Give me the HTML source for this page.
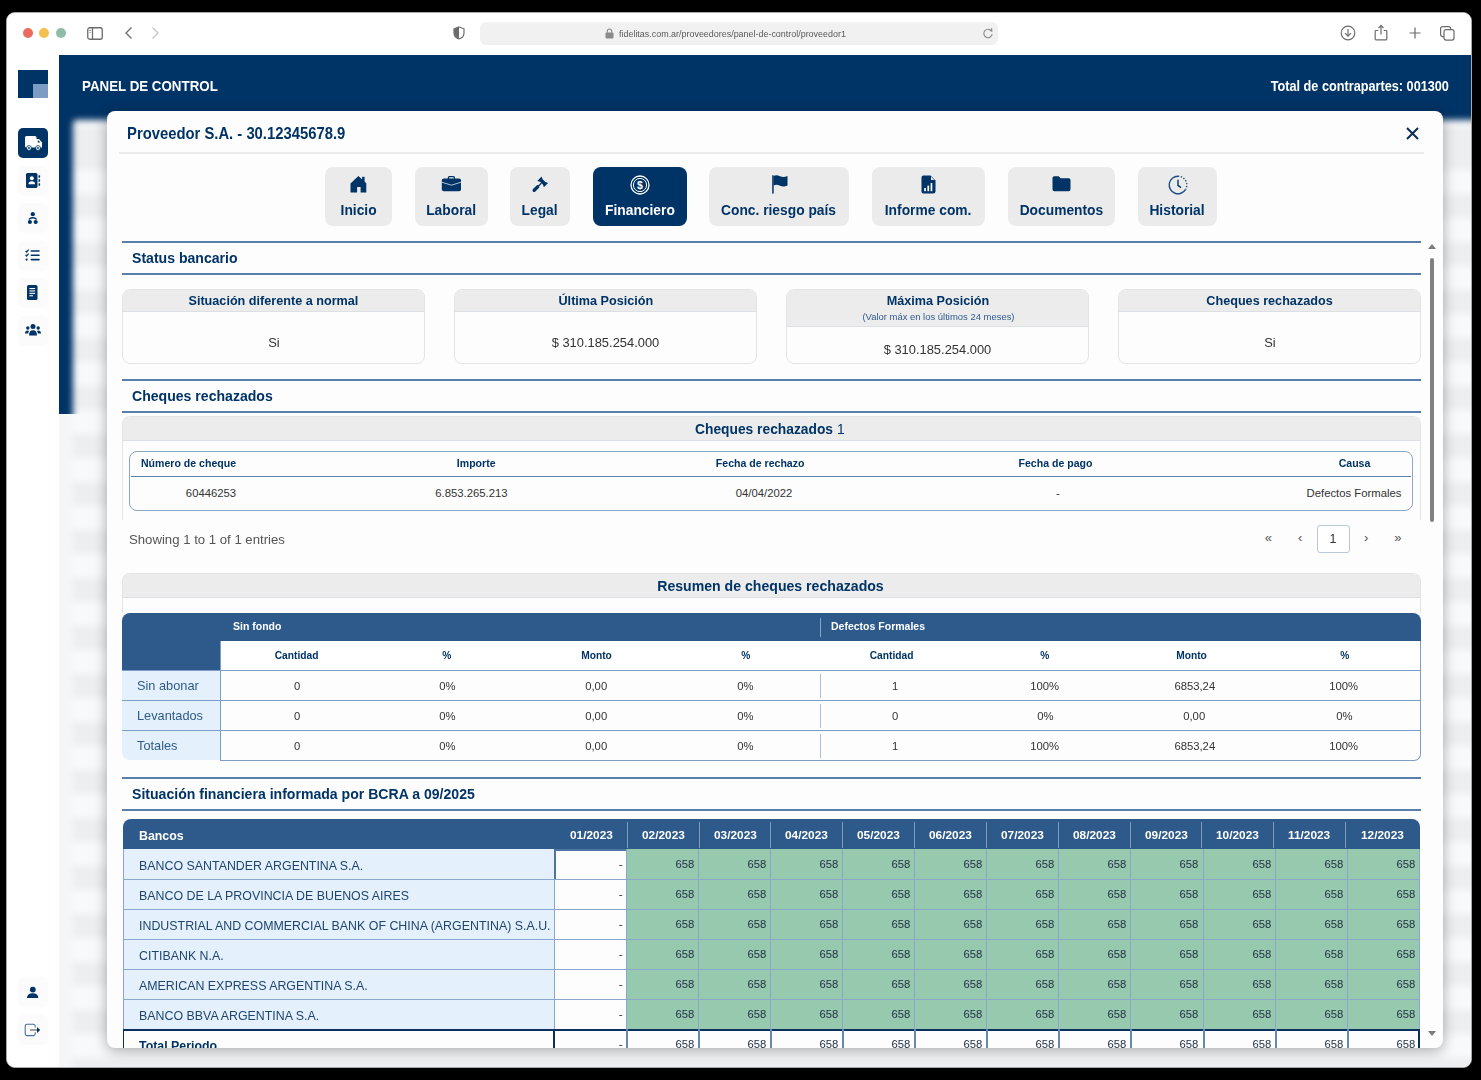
<!DOCTYPE html>
<html><head><meta charset="utf-8">
<style>
*{box-sizing:border-box}
html,body{margin:0;padding:0}
body{width:1481px;height:1080px;background:#000;position:relative;overflow:hidden;font-family:"Liberation Sans",sans-serif;color:#333}
.a{position:absolute}
.t{white-space:nowrap}
.win{position:absolute;left:6px;top:12px;width:1466px;height:1056px;border:1px solid #a8a8a8;border-radius:9px;background:#fff;overflow:hidden}
.pc{position:absolute;left:-7px;top:-13px;width:1481px;height:1080px}
svg{position:absolute;overflow:visible}
</style></head><body>
<div class="win"><div class="pc">
<div class="a" style="left:7px;top:13px;width:1464px;height:42px;background:#fff"></div>
<div class="a" style="left:23px;top:28px;width:10px;height:10px;border-radius:50%;background:#ec6a5e"></div>
<div class="a" style="left:39px;top:28px;width:10px;height:10px;border-radius:50%;background:#f3bf4f"></div>
<div class="a" style="left:56px;top:28px;width:10px;height:10px;border-radius:50%;background:#8fbca8"></div>
<svg style="left:87px;top:27px" width="16" height="13"><rect x="0.75" y="0.75" width="14.5" height="11.5" rx="2" fill="none" stroke="#6b6b6b" stroke-width="1.3"/><line x1="5.5" y1="1" x2="5.5" y2="12" stroke="#6b6b6b" stroke-width="1.3"/><line x1="2.3" y1="3.5" x2="4" y2="3.5" stroke="#6b6b6b" stroke-width="0.9"/><line x1="2.3" y1="5.5" x2="4" y2="5.5" stroke="#8aa8d0" stroke-width="0.9"/></svg><svg style="left:124px;top:26px" width="10" height="14"><polyline points="7.5,1.5 2,7 7.5,12.5" fill="none" stroke="#6b6b6b" stroke-width="1.3"/></svg><svg style="left:150px;top:26px" width="10" height="14"><polyline points="2.5,1.5 8,7 2.5,12.5" fill="none" stroke="#c5c5c5" stroke-width="1.3"/></svg><svg style="left:453px;top:26px" width="12" height="14"><path d="M6 1 L11 2.8 V7 C11 10 8.5 12.3 6 13 C3.5 12.3 1 10 1 7 V2.8 Z" fill="none" stroke="#6b6b6b" stroke-width="1.2"/><path d="M6 1 L1 2.8 V7 C1 10 3.5 12.3 6 13 Z" fill="#6b6b6b"/></svg><div class="a" style="left:480px;top:22px;width:518px;height:23px;border-radius:6px;background:#f1f1f1"></div>
<svg style="left:605px;top:28px" width="9" height="11"><rect x="0.5" y="4.5" width="8" height="6" rx="1" fill="#8a8a8a"/><path d="M2.3 4.8 V3.2 A2.2 2.2 0 0 1 6.7 3.2 V4.8" fill="none" stroke="#8a8a8a" stroke-width="1.1"/></svg><div class="a t" style="left:619px;top:28.93px;font-size:9.5px;line-height:9.5px;font-weight:400;color:#5a5a5a;"><span style="display:inline-block;transform:scaleX(0.94);transform-origin:left center">fidelitas.com.ar/proveedores/panel-de-control/proveedor1</span></div>
<svg style="left:982px;top:27px" width="12" height="13"><path d="M9.6 4.2 A4.2 4.2 0 1 0 10.2 7.2" fill="none" stroke="#8a8a8a" stroke-width="1.1"/><polyline points="6.8,2.4 9.8,4.3 9.6,1" fill="none" stroke="#8a8a8a" stroke-width="1.1"/></svg><svg style="left:1340px;top:25px" width="16" height="16"><circle cx="8" cy="8" r="6.8" fill="none" stroke="#6b6b6b" stroke-width="1.2"/><line x1="8" y1="4" x2="8" y2="11" stroke="#6b6b6b" stroke-width="1.2"/><polyline points="5,8.2 8,11.2 11,8.2" fill="none" stroke="#6b6b6b" stroke-width="1.2"/></svg><svg style="left:1374px;top:24px" width="14" height="17"><path d="M4.3 6.5 H2 Q1.2 6.5 1.2 7.3 V15 Q1.2 15.8 2 15.8 H12 Q12.8 15.8 12.8 15 V7.3 Q12.8 6.5 12 6.5 H9.7" fill="none" stroke="#6b6b6b" stroke-width="1.2"/><line x1="7" y1="1.5" x2="7" y2="10.5" stroke="#6b6b6b" stroke-width="1.2"/><polyline points="4.5,4 7,1.5 9.5,4" fill="none" stroke="#6b6b6b" stroke-width="1.2"/></svg><svg style="left:1409px;top:27px" width="12" height="12"><line x1="6" y1="0.5" x2="6" y2="11.5" stroke="#6b6b6b" stroke-width="1.2"/><line x1="0.5" y1="6" x2="11.5" y2="6" stroke="#6b6b6b" stroke-width="1.2"/></svg><svg style="left:1440px;top:26px" width="15" height="15"><rect x="0.6" y="0.6" width="10" height="10" rx="2" fill="none" stroke="#6b6b6b" stroke-width="1.2"/><rect x="4" y="3.6" width="10" height="10.5" rx="2" fill="#fff" stroke="#6b6b6b" stroke-width="1.2"/></svg><div class="a" style="left:7px;top:55px;width:52px;height:1012px;background:#fff"></div>
<div class="a" style="left:18px;top:70px;width:30px;height:28px;background:#003366"></div>
<div class="a" style="left:33px;top:84px;width:15px;height:14px;background:#7d9cc3"></div>
<div class="a" style="left:18px;top:165.5px;width:30px;height:30px;border-radius:5px;background:#fbfbfb"></div>
<div class="a" style="left:18px;top:203px;width:30px;height:30px;border-radius:5px;background:#fbfbfb"></div>
<div class="a" style="left:18px;top:240.5px;width:30px;height:30px;border-radius:5px;background:#fbfbfb"></div>
<div class="a" style="left:18px;top:278px;width:30px;height:30px;border-radius:5px;background:#fbfbfb"></div>
<div class="a" style="left:18px;top:315.5px;width:30px;height:30px;border-radius:5px;background:#fbfbfb"></div>
<div class="a" style="left:18px;top:977px;width:30px;height:30px;border-radius:5px;background:#fbfbfb"></div>
<div class="a" style="left:18px;top:1014.5px;width:30px;height:30px;border-radius:5px;background:#fbfbfb"></div>
<div class="a" style="left:18px;top:128px;width:30px;height:30px;border-radius:5px;background:#003366"></div>
<svg style="left:25px;top:136px" width="18" height="15" viewBox="0 0 18 15"><rect x="0" y="0" width="11.5" height="11.5" rx="1.5" fill="#fff"/><path d="M11 3 H14 L17 6.5 V11.5 H11 Z" fill="#fff"/><path d="M12.8 4.6 H13.6 L15.3 6.6 H12.8 Z" fill="#003366"/><circle cx="4" cy="12" r="2.4" fill="#fff" stroke="#003366" stroke-width="0.8"/><circle cx="4" cy="12" r="0.9" fill="#003366"/><circle cx="13" cy="12" r="2.4" fill="#fff" stroke="#003366" stroke-width="0.8"/><circle cx="13" cy="12" r="0.9" fill="#003366"/></svg><svg style="left:26px;top:173px" width="15" height="15" viewBox="0 0 15 15"><rect x="0" y="0" width="11.5" height="15" rx="1.6" fill="#003366"/><circle cx="5.8" cy="5.3" r="2" fill="#fff"/><path d="M2.5 11.3 Q2.5 8.3 5.8 8.3 Q9.1 8.3 9.1 11.3 Z" fill="#fff"/><rect x="12.5" y="2.2" width="1.6" height="2.6" rx=".5" fill="#003366"/><rect x="12.5" y="6.2" width="1.6" height="2.6" rx=".5" fill="#003366"/><rect x="12.5" y="10.2" width="1.6" height="2.6" rx=".5" fill="#003366"/></svg><svg style="left:27px;top:211px" width="12" height="14" viewBox="0 0 12 14"><circle cx="5.8" cy="3.2" r="2.1" fill="#003366"/><path d="M2.4 8 Q5.8 5.4 9.2 8" fill="none" stroke="#003366" stroke-width="1.5" stroke-linecap="round"/><circle cx="2.9" cy="11" r="2.1" fill="#003366"/><circle cx="8.7" cy="11" r="2.1" fill="#003366"/></svg><svg style="left:25px;top:249px" width="15" height="12" viewBox="0 0 15 12"><polyline points="0.6,2 1.6,3 3.6,0.6" fill="none" stroke="#003366" stroke-width="1.2"/><polyline points="0.6,6 1.6,7 3.6,4.6" fill="none" stroke="#003366" stroke-width="1.2"/><circle cx="1.6" cy="10.6" r="1.1" fill="#003366"/><rect x="5.5" y="1.2" width="9.3" height="1.6" rx=".8" fill="#003366"/><rect x="5.5" y="5.4" width="9.3" height="1.6" rx=".8" fill="#003366"/><rect x="5.5" y="9.8" width="9.3" height="1.6" rx=".8" fill="#003366"/></svg><svg style="left:27px;top:285px" width="11" height="15" viewBox="0 0 11 15"><rect x="0" y="0" width="10.5" height="15" rx="1.6" fill="#003366"/><rect x="2.4" y="3" width="5.7" height="1.1" fill="#fff"/><rect x="2.4" y="5.4" width="5.7" height="1.1" fill="#fff"/><rect x="2.4" y="7.8" width="5.7" height="1.1" fill="#fff"/><rect x="2.4" y="10.2" width="3.6" height="1.1" fill="#fff"/></svg><svg style="left:25px;top:324px" width="16" height="12" viewBox="0 0 16 12"><circle cx="8" cy="2.6" r="2.5" fill="#003366"/><path d="M4 11.5 Q4 6.3 8 6.3 Q12 6.3 12 11.5 Z" fill="#003366"/><circle cx="2.8" cy="4" r="1.7" fill="#003366"/><path d="M0 9.6 Q0 6.6 2.8 6.6 Q3.6 6.6 4 7 Q3.2 8 3.2 9.6 Z" fill="#003366"/><circle cx="13.2" cy="4" r="1.7" fill="#003366"/><path d="M16 9.6 Q16 6.6 13.2 6.6 Q12.4 6.6 12 7 Q12.8 8 12.8 9.6 Z" fill="#003366"/></svg><svg style="left:26px;top:986px" width="13" height="13" viewBox="0 0 13 13"><circle cx="6.8" cy="3.6" r="2.9" fill="#003366"/><path d="M1 12 Q1 7.2 6.7 7.2 Q12.3 7.2 12.3 12 Z" fill="#003366"/></svg><svg style="left:24px;top:1023px" width="18" height="14" viewBox="0 0 18 14"><path d="M11.2 4.6 V3 Q11.2 1.2 9.4 1.2 H3 Q1.2 1.2 1.2 3 V10.8 Q1.2 12.6 3 12.6 H9.4 Q11.2 12.6 11.2 10.8 V9.2" fill="none" stroke="#4a72a0" stroke-width="1.1"/><line x1="6.1" y1="7" x2="13.4" y2="7" stroke="#808080" stroke-width="1.7"/><path d="M13 4 L16.2 7 L13 10 Z" fill="#003366"/></svg><div class="a" style="left:59px;top:55px;width:1412px;height:359px;background:#003366"></div>
<div class="a" style="left:59px;top:414px;width:1412px;height:653px;background:#f5f6f8"></div>
<div class="a t" style="left:82px;top:78.23px;font-size:15.5px;line-height:15.5px;font-weight:700;color:#fff;"><span style="display:inline-block;transform:scaleX(0.86);transform-origin:left center">PANEL DE CONTROL</span></div>
<div class="a t" style="left:648.5999999999999px;width:800px;text-align:right;top:79.29px;font-size:14.6px;line-height:14.6px;font-weight:700;color:#fff;"><span style="display:inline-block;transform:scaleX(0.87);transform-origin:right center">Total de contrapartes: 001300</span></div>
<div class="a" style="left:73px;top:120px;width:1420px;height:980px;border-radius:4px;background:repeating-linear-gradient(180deg,#eceef0 0px,#eceef0 24px,#f8f9fa 24px,#f8f9fa 48px);background-position:0 26px;filter:blur(3px)"></div>
<div class="a" style="left:107px;top:111px;width:1336px;height:937px;background:#fdfdfd;border-radius:8px;overflow:hidden;box-shadow:0 3px 14px rgba(0,0,0,.32)"><div class="a" style="left:-107px;top:-111px;width:1481px;height:1080px">
<div class="a t" style="left:127px;top:125.14px;font-size:16.3px;line-height:16.3px;font-weight:700;color:#003366;"><span style="display:inline-block;transform:scaleX(0.91);transform-origin:left center">Proveedor S.A. - 30.12345678.9</span></div>
<svg style="left:1406px;top:127px" width="13" height="13"><path d="M1 1 L12 12 M12 1 L1 12" stroke="#0b2c55" stroke-width="2"/></svg><div class="a" style="left:119px;top:152px;width:1305px;height:2px;background:#ebebeb"></div>
<div class="a" style="left:325px;top:167px;width:67px;height:59px;border-radius:8px;background:#ebebeb"></div>
<div class="a t" style="left:-41.5px;width:800px;text-align:center;top:202.25px;font-size:15px;line-height:15px;font-weight:700;color:#003366;"><span style="display:inline-block;transform:scaleX(0.92);transform-origin:center center">Inicio</span></div>
<div class="a" style="left:415px;top:167px;width:73px;height:59px;border-radius:8px;background:#ebebeb"></div>
<div class="a t" style="left:51.5px;width:800px;text-align:center;top:202.25px;font-size:15px;line-height:15px;font-weight:700;color:#003366;"><span style="display:inline-block;transform:scaleX(0.92);transform-origin:center center">Laboral</span></div>
<div class="a" style="left:510px;top:167px;width:60px;height:59px;border-radius:8px;background:#ebebeb"></div>
<div class="a t" style="left:140.0px;width:800px;text-align:center;top:202.25px;font-size:15px;line-height:15px;font-weight:700;color:#003366;"><span style="display:inline-block;transform:scaleX(0.92);transform-origin:center center">Legal</span></div>
<div class="a" style="left:593px;top:167px;width:94px;height:59px;border-radius:8px;background:#003366"></div>
<div class="a t" style="left:240.0px;width:800px;text-align:center;top:202.25px;font-size:15px;line-height:15px;font-weight:700;color:#fff;"><span style="display:inline-block;transform:scaleX(0.92);transform-origin:center center">Financiero</span></div>
<div class="a" style="left:709px;top:167px;width:140px;height:59px;border-radius:8px;background:#ebebeb"></div>
<div class="a t" style="left:379.0px;width:800px;text-align:center;top:202.25px;font-size:15px;line-height:15px;font-weight:700;color:#003366;"><span style="display:inline-block;transform:scaleX(0.92);transform-origin:center center">Conc. riesgo país</span></div>
<div class="a" style="left:872px;top:167px;width:113px;height:59px;border-radius:8px;background:#ebebeb"></div>
<div class="a t" style="left:528.5px;width:800px;text-align:center;top:202.25px;font-size:15px;line-height:15px;font-weight:700;color:#003366;"><span style="display:inline-block;transform:scaleX(0.92);transform-origin:center center">Informe com.</span></div>
<div class="a" style="left:1008px;top:167px;width:107px;height:59px;border-radius:8px;background:#ebebeb"></div>
<div class="a t" style="left:661.5px;width:800px;text-align:center;top:202.25px;font-size:15px;line-height:15px;font-weight:700;color:#003366;"><span style="display:inline-block;transform:scaleX(0.92);transform-origin:center center">Documentos</span></div>
<div class="a" style="left:1138px;top:167px;width:79px;height:59px;border-radius:8px;background:#ebebeb"></div>
<div class="a t" style="left:777.5px;width:800px;text-align:center;top:202.25px;font-size:15px;line-height:15px;font-weight:700;color:#003366;"><span style="display:inline-block;transform:scaleX(0.92);transform-origin:center center">Historial</span></div>
<svg style="left:350px;top:175px" width="17" height="18" viewBox="0 0 17 18"><path d="M8.4 0.9 L16.3 8.3 V17.6 H10.6 V11.9 H7.1 V17.6 H0.5 V8.6 Z" fill="#003366"/><rect x="12.1" y="1.8" width="2.5" height="5.5" fill="#003366"/></svg>
<svg style="left:441px;top:176px" width="21" height="16" viewBox="0 0 21 16"><rect x="7.4" y="0.7" width="6" height="3" rx="1" fill="none" stroke="#003366" stroke-width="1.3"/><rect x="0.8" y="2.6" width="19.2" height="12.6" rx="2" fill="#003366"/><path d="M0.8 6.2 L10.4 9.2 L20 6.2" fill="none" stroke="#c9d3df" stroke-width="0.9"/></svg>
<svg style="left:530px;top:174px" width="20" height="20" viewBox="0 0 20 20"><path d="M7.3 6.9 L11.6 2.6 L12.6 5.2 L15.4 8 L18.1 9 L13.9 13.2 L12.9 10.6 L10.1 7.8 Z" fill="#003366"/><path d="M5 15.5 L11.5 9" stroke="#003366" stroke-width="1.3"/><path d="M4.2 16.3 L7.6 12.9" stroke="#003366" stroke-width="3.4" stroke-linecap="round"/></svg>
<svg style="left:630px;top:175px" width="20" height="20" viewBox="0 0 20 20"><circle cx="10" cy="10" r="9" fill="none" stroke="#fff" stroke-width="1.3"/><circle cx="10" cy="10" r="6.6" fill="none" stroke="#fff" stroke-width="1"/><text x="10" y="13.6" font-family="Liberation Sans" font-weight="700" font-size="10.5" fill="#fff" text-anchor="middle">$</text></svg>
<svg style="left:772px;top:175px" width="17" height="19" viewBox="0 0 17 19"><rect x="0.2" y="0.3" width="1.5" height="18.3" fill="#003366"/><path d="M1.5 1 Q4.5 -0.4 8 1.2 Q11.5 2.8 15.5 1 V10.5 Q11.5 12.3 8 10.7 Q4.5 9 1.5 10.5 Z" fill="#003366"/></svg>
<svg style="left:921px;top:175px" width="15" height="19" viewBox="0 0 15 19"><path d="M2.3 0.5 H9.5 L14.5 5.5 V16.3 Q14.5 18.5 12.3 18.5 H2.3 Q0.5 18.5 0.5 16.3 V2.7 Q0.5 0.5 2.3 0.5 Z" fill="#003366"/><path d="M10 1.6 L13.4 5 H10 Z" fill="#dfe4ea"/><rect x="3.2" y="13" width="1.7" height="3.2" fill="#fff"/><rect x="6.4" y="10.6" width="1.7" height="5.6" fill="#fff"/><rect x="9.6" y="8" width="1.7" height="8.2" fill="#fff"/></svg>
<svg style="left:1052px;top:176px" width="19" height="16" viewBox="0 0 19 16"><path d="M0.5 2 Q0.5 0.3 2.2 0.3 H6.7 L8.6 2.3 H16.8 Q18.5 2.3 18.5 4 V13.3 Q18.5 15.2 16.6 15.2 H2.4 Q0.5 15.2 0.5 13.3 Z" fill="#003366"/></svg>
<svg style="left:1168px;top:175px" width="20" height="20" viewBox="0 0 20 20"><path d="M10 1.2 A8.8 8.8 0 1 0 17.62 14.4" fill="none" stroke="#1f4f88" stroke-width="1.4"/><path d="M10 1.2 A8.8 8.8 0 0 1 17.62 14.4" fill="none" stroke="#1f4f88" stroke-width="1.4" stroke-dasharray="1.3 1.6"/><path d="M10 4.8 V10.4 L13 12.6" fill="none" stroke="#003366" stroke-width="1.4"/></svg>
<div class="a" style="left:122px;top:241px;width:1299px;height:2px;background:#5a7eaa"></div>
<div class="a" style="left:122px;top:273px;width:1299px;height:2px;background:#5a7eaa"></div>
<div class="a t" style="left:131.5px;top:250.00px;font-size:15.3px;line-height:15.3px;font-weight:700;color:#003366;"><span style="display:inline-block;transform:scaleX(0.92);transform-origin:left center">Status bancario</span></div>
<div class="a" style="left:122px;top:289px;width:303px;height:75px;border:1px solid #e4e4e4;border-radius:8px;background:#fdfdfd;overflow:hidden"></div>
<div class="a" style="left:123px;top:290px;width:301px;height:22px;background:#ececec;border-radius:7px 7px 0 0;border-bottom:1px solid #dcdfe3"></div>
<div class="a t" style="left:-126.5px;width:800px;text-align:center;top:293.69px;font-size:13.3px;line-height:13.3px;font-weight:700;color:#003366;"><span style="display:inline-block;transform:scaleX(0.95);transform-origin:center center">Situación diferente a normal</span></div>
<div class="a t" style="left:-126.5px;width:800px;text-align:center;top:335.50px;font-size:13.3px;line-height:13.3px;font-weight:400;color:#333;"><span style="display:inline-block;transform:scaleX(0.97);transform-origin:center center">Si</span></div>
<div class="a" style="left:454px;top:289px;width:303px;height:75px;border:1px solid #e4e4e4;border-radius:8px;background:#fdfdfd;overflow:hidden"></div>
<div class="a" style="left:455px;top:290px;width:301px;height:22px;background:#ececec;border-radius:7px 7px 0 0;border-bottom:1px solid #dcdfe3"></div>
<div class="a t" style="left:205.5px;width:800px;text-align:center;top:293.69px;font-size:13.3px;line-height:13.3px;font-weight:700;color:#003366;"><span style="display:inline-block;transform:scaleX(0.95);transform-origin:center center">Última Posición</span></div>
<div class="a t" style="left:205.5px;width:800px;text-align:center;top:335.50px;font-size:13.3px;line-height:13.3px;font-weight:400;color:#333;"><span style="display:inline-block;transform:scaleX(0.97);transform-origin:center center">$ 310.185.254.000</span></div>
<div class="a" style="left:786px;top:289px;width:303px;height:75px;border:1px solid #e4e4e4;border-radius:8px;background:#fdfdfd;overflow:hidden"></div>
<div class="a" style="left:787px;top:290px;width:301px;height:37px;background:#ececec;border-radius:7px 7px 0 0;border-bottom:1px solid #dcdfe3"></div>
<div class="a t" style="left:537.5px;width:800px;text-align:center;top:293.69px;font-size:13.3px;line-height:13.3px;font-weight:700;color:#003366;"><span style="display:inline-block;transform:scaleX(0.95);transform-origin:center center">Máxima Posición</span></div>
<div class="a t" style="left:538.5px;width:800px;text-align:center;top:312.55px;font-size:9px;line-height:9px;font-weight:400;color:#2f5b8e;"><span style="display:inline-block;transform:scaleX(1.05);transform-origin:center center">(Valor máx en los últimos 24 meses)</span></div>
<div class="a t" style="left:537.5px;width:800px;text-align:center;top:343.19px;font-size:13.3px;line-height:13.3px;font-weight:400;color:#333;"><span style="display:inline-block;transform:scaleX(0.97);transform-origin:center center">$ 310.185.254.000</span></div>
<div class="a" style="left:1118px;top:289px;width:303px;height:75px;border:1px solid #e4e4e4;border-radius:8px;background:#fdfdfd;overflow:hidden"></div>
<div class="a" style="left:1119px;top:290px;width:301px;height:22px;background:#ececec;border-radius:7px 7px 0 0;border-bottom:1px solid #dcdfe3"></div>
<div class="a t" style="left:869.5px;width:800px;text-align:center;top:293.69px;font-size:13.3px;line-height:13.3px;font-weight:700;color:#003366;"><span style="display:inline-block;transform:scaleX(0.95);transform-origin:center center">Cheques rechazados</span></div>
<div class="a t" style="left:869.5px;width:800px;text-align:center;top:335.50px;font-size:13.3px;line-height:13.3px;font-weight:400;color:#333;"><span style="display:inline-block;transform:scaleX(0.97);transform-origin:center center">Si</span></div>
<div class="a" style="left:122px;top:379px;width:1299px;height:2px;background:#5a7eaa"></div>
<div class="a" style="left:122px;top:411px;width:1299px;height:2px;background:#5a7eaa"></div>
<div class="a t" style="left:131.5px;top:388.00px;font-size:15.3px;line-height:15.3px;font-weight:700;color:#003366;"><span style="display:inline-block;transform:scaleX(0.92);transform-origin:left center">Cheques rechazados</span></div>
<div class="a" style="left:122px;top:416px;width:1299px;height:104px;border:1px solid #e4e4e4;border-bottom:none;border-radius:8px 8px 0 0;background:#fdfdfd"></div>
<div class="a" style="left:123px;top:417px;width:1297px;height:24px;background:#ececec;border-radius:7px 7px 0 0;border-bottom:1px solid #dcdfe3"></div>
<div class="a t" style="left:694.8px;top:420.55px;font-size:15px;line-height:15px;font-weight:700;color:#003366;"><span style="display:inline-block;transform:scaleX(0.92);transform-origin:left center">Cheques rechazados <span style="font-weight:400">1</span></span></div>
<div class="a" style="left:129px;top:451px;width:1284px;height:60px;border:1px solid #8ea7c6;border-radius:8px"></div>
<div class="a" style="left:131px;top:476px;width:1280px;height:1px;background:#5f81ab"></div>
<div class="a t" style="left:-211.5px;width:800px;text-align:center;top:457.95px;font-size:11px;line-height:11px;font-weight:700;color:#003366;"><span style="display:inline-block;transform:scaleX(0.96);transform-origin:center center">Número de cheque</span></div>
<div class="a t" style="left:76px;width:800px;text-align:center;top:457.95px;font-size:11px;line-height:11px;font-weight:700;color:#003366;"><span style="display:inline-block;transform:scaleX(0.96);transform-origin:center center">Importe</span></div>
<div class="a t" style="left:360px;width:800px;text-align:center;top:457.95px;font-size:11px;line-height:11px;font-weight:700;color:#003366;"><span style="display:inline-block;transform:scaleX(0.96);transform-origin:center center">Fecha de rechazo</span></div>
<div class="a t" style="left:656px;width:800px;text-align:center;top:457.95px;font-size:11px;line-height:11px;font-weight:700;color:#003366;"><span style="display:inline-block;transform:scaleX(0.96);transform-origin:center center">Fecha de pago</span></div>
<div class="a t" style="left:954.5px;width:800px;text-align:center;top:457.95px;font-size:11px;line-height:11px;font-weight:700;color:#003366;"><span style="display:inline-block;transform:scaleX(0.96);transform-origin:center center">Causa</span></div>
<div class="a t" style="left:-189px;width:800px;text-align:center;top:488.19px;font-size:11.3px;line-height:11.3px;font-weight:400;color:#333;">60446253</div>
<div class="a t" style="left:71.39999999999998px;width:800px;text-align:center;top:488.19px;font-size:11.3px;line-height:11.3px;font-weight:400;color:#333;">6.853.265.213</div>
<div class="a t" style="left:364px;width:800px;text-align:center;top:488.19px;font-size:11.3px;line-height:11.3px;font-weight:400;color:#333;">04/04/2022</div>
<div class="a t" style="left:658px;width:800px;text-align:center;top:488.19px;font-size:11.3px;line-height:11.3px;font-weight:400;color:#333;">-</div>
<div class="a t" style="left:954px;width:800px;text-align:center;top:488.19px;font-size:11.3px;line-height:11.3px;font-weight:400;color:#333;">Defectos Formales</div>
<div class="a t" style="left:129.2px;top:532.60px;font-size:13.3px;line-height:13.3px;font-weight:400;color:#555;"><span style="display:inline-block;transform:scaleX(0.99);transform-origin:left center">Showing 1 to 1 of 1 entries</span></div>
<div class="a" style="left:1317px;top:525px;width:33px;height:28px;border:1px solid #b9c7d8;border-radius:3px;background:#fff"></div>
<div class="a t" style="left:933px;width:800px;text-align:center;top:532.54px;font-size:12.3px;line-height:12.3px;font-weight:400;color:#333;">1</div>
<div class="a t" style="left:868.4000000000001px;width:800px;text-align:center;top:530.95px;font-size:13px;line-height:13px;font-weight:400;color:#555;">«</div>
<div class="a t" style="left:900.2px;width:800px;text-align:center;top:530.95px;font-size:13px;line-height:13px;font-weight:400;color:#555;">‹</div>
<div class="a t" style="left:966.2px;width:800px;text-align:center;top:530.95px;font-size:13px;line-height:13px;font-weight:400;color:#555;">›</div>
<div class="a t" style="left:997.8px;width:800px;text-align:center;top:530.95px;font-size:13px;line-height:13px;font-weight:400;color:#555;">»</div>
<div class="a" style="left:122px;top:573px;width:1299px;height:40px;border:1px solid #e4e4e4;border-bottom:none;border-radius:8px 8px 0 0;background:#fdfdfd"></div>
<div class="a" style="left:123px;top:574px;width:1297px;height:24px;background:#ececec;border-radius:7px 7px 0 0;border-bottom:1px solid #dcdfe3"></div>
<div class="a t" style="left:370.79999999999995px;width:800px;text-align:center;top:577.55px;font-size:15px;line-height:15px;font-weight:700;color:#003366;"><span style="display:inline-block;transform:scaleX(0.94);transform-origin:center center">Resumen de cheques rechazados</span></div>
<div class="a" style="left:122px;top:613px;width:1299px;height:28px;background:#2d5a8a;border-radius:8px 8px 0 0"></div>
<div class="a" style="left:122px;top:641px;width:98px;height:30px;background:#2d5a8a"></div>
<div class="a" style="left:220px;top:641px;width:1201px;height:120px;background:#fdfdfd;border:1px solid #7d9cc6;border-top:none;border-radius:0 0 7px 0"></div>
<div class="a" style="left:221px;top:641px;width:1199px;height:29px;background:#fff"></div>
<div class="a t" style="left:233px;top:621.39px;font-size:11.3px;line-height:11.3px;font-weight:700;color:#fff;"><span style="display:inline-block;transform:scaleX(0.93);transform-origin:left center">Sin fondo</span></div>
<div class="a t" style="left:831px;top:621.39px;font-size:11.3px;line-height:11.3px;font-weight:700;color:#fff;"><span style="display:inline-block;transform:scaleX(0.93);transform-origin:left center">Defectos Formales</span></div>
<div class="a" style="left:820px;top:618px;width:1px;height:19px;background:#8aa3c2"></div>
<div class="a t" style="left:-103px;width:800px;text-align:center;top:650.35px;font-size:11px;line-height:11px;font-weight:700;color:#003366;"><span style="display:inline-block;transform:scaleX(0.93);transform-origin:center center">Cantidad</span></div>
<div class="a t" style="left:46.5px;width:800px;text-align:center;top:650.35px;font-size:11px;line-height:11px;font-weight:700;color:#003366;"><span style="display:inline-block;transform:scaleX(0.93);transform-origin:center center">%</span></div>
<div class="a t" style="left:196px;width:800px;text-align:center;top:650.35px;font-size:11px;line-height:11px;font-weight:700;color:#003366;"><span style="display:inline-block;transform:scaleX(0.93);transform-origin:center center">Monto</span></div>
<div class="a t" style="left:345.5px;width:800px;text-align:center;top:650.35px;font-size:11px;line-height:11px;font-weight:700;color:#003366;"><span style="display:inline-block;transform:scaleX(0.93);transform-origin:center center">%</span></div>
<div class="a t" style="left:492px;width:800px;text-align:center;top:650.35px;font-size:11px;line-height:11px;font-weight:700;color:#003366;"><span style="display:inline-block;transform:scaleX(0.93);transform-origin:center center">Cantidad</span></div>
<div class="a t" style="left:645px;width:800px;text-align:center;top:650.35px;font-size:11px;line-height:11px;font-weight:700;color:#003366;"><span style="display:inline-block;transform:scaleX(0.93);transform-origin:center center">%</span></div>
<div class="a t" style="left:791px;width:800px;text-align:center;top:650.35px;font-size:11px;line-height:11px;font-weight:700;color:#003366;"><span style="display:inline-block;transform:scaleX(0.93);transform-origin:center center">Monto</span></div>
<div class="a t" style="left:945px;width:800px;text-align:center;top:650.35px;font-size:11px;line-height:11px;font-weight:700;color:#003366;"><span style="display:inline-block;transform:scaleX(0.93);transform-origin:center center">%</span></div>
<div class="a" style="left:122px;top:671px;width:98px;height:30px;background:#e4f1fc;"></div>
<div class="a" style="left:122px;top:670px;width:1298px;height:1px;background:#7d9cc6"></div>
<div class="a t" style="left:137.3px;top:679.40px;font-size:13.3px;line-height:13.3px;font-weight:400;color:#2f5a88;"><span style="display:inline-block;transform:scaleX(0.96);transform-origin:left center">Sin abonar</span></div>
<div class="a t" style="left:-103px;width:800px;text-align:center;top:680.93px;font-size:11.5px;line-height:11.5px;font-weight:400;color:#333;"><span style="display:inline-block;transform:scaleX(0.98);transform-origin:center center">0</span></div>
<div class="a t" style="left:47px;width:800px;text-align:center;top:680.93px;font-size:11.5px;line-height:11.5px;font-weight:400;color:#333;"><span style="display:inline-block;transform:scaleX(0.98);transform-origin:center center">0%</span></div>
<div class="a t" style="left:196.29999999999995px;width:800px;text-align:center;top:680.93px;font-size:11.5px;line-height:11.5px;font-weight:400;color:#333;"><span style="display:inline-block;transform:scaleX(0.98);transform-origin:center center">0,00</span></div>
<div class="a t" style="left:345.70000000000005px;width:800px;text-align:center;top:680.93px;font-size:11.5px;line-height:11.5px;font-weight:400;color:#333;"><span style="display:inline-block;transform:scaleX(0.98);transform-origin:center center">0%</span></div>
<div class="a t" style="left:495px;width:800px;text-align:center;top:680.93px;font-size:11.5px;line-height:11.5px;font-weight:400;color:#333;"><span style="display:inline-block;transform:scaleX(0.98);transform-origin:center center">1</span></div>
<div class="a t" style="left:645px;width:800px;text-align:center;top:680.93px;font-size:11.5px;line-height:11.5px;font-weight:400;color:#333;"><span style="display:inline-block;transform:scaleX(0.98);transform-origin:center center">100%</span></div>
<div class="a t" style="left:794.4000000000001px;width:800px;text-align:center;top:680.93px;font-size:11.5px;line-height:11.5px;font-weight:400;color:#333;"><span style="display:inline-block;transform:scaleX(0.98);transform-origin:center center">6853,24</span></div>
<div class="a t" style="left:944px;width:800px;text-align:center;top:680.93px;font-size:11.5px;line-height:11.5px;font-weight:400;color:#333;"><span style="display:inline-block;transform:scaleX(0.98);transform-origin:center center">100%</span></div>
<div class="a" style="left:820px;top:674px;width:1px;height:24px;background:#aebdd1"></div>
<div class="a" style="left:122px;top:701px;width:98px;height:30px;background:#e4f1fc;"></div>
<div class="a" style="left:122px;top:700px;width:1298px;height:1px;background:#7d9cc6"></div>
<div class="a t" style="left:137.3px;top:709.40px;font-size:13.3px;line-height:13.3px;font-weight:400;color:#2f5a88;"><span style="display:inline-block;transform:scaleX(0.96);transform-origin:left center">Levantados</span></div>
<div class="a t" style="left:-103px;width:800px;text-align:center;top:710.93px;font-size:11.5px;line-height:11.5px;font-weight:400;color:#333;"><span style="display:inline-block;transform:scaleX(0.98);transform-origin:center center">0</span></div>
<div class="a t" style="left:47px;width:800px;text-align:center;top:710.93px;font-size:11.5px;line-height:11.5px;font-weight:400;color:#333;"><span style="display:inline-block;transform:scaleX(0.98);transform-origin:center center">0%</span></div>
<div class="a t" style="left:196.29999999999995px;width:800px;text-align:center;top:710.93px;font-size:11.5px;line-height:11.5px;font-weight:400;color:#333;"><span style="display:inline-block;transform:scaleX(0.98);transform-origin:center center">0,00</span></div>
<div class="a t" style="left:345.70000000000005px;width:800px;text-align:center;top:710.93px;font-size:11.5px;line-height:11.5px;font-weight:400;color:#333;"><span style="display:inline-block;transform:scaleX(0.98);transform-origin:center center">0%</span></div>
<div class="a t" style="left:495px;width:800px;text-align:center;top:710.93px;font-size:11.5px;line-height:11.5px;font-weight:400;color:#333;"><span style="display:inline-block;transform:scaleX(0.98);transform-origin:center center">0</span></div>
<div class="a t" style="left:645px;width:800px;text-align:center;top:710.93px;font-size:11.5px;line-height:11.5px;font-weight:400;color:#333;"><span style="display:inline-block;transform:scaleX(0.98);transform-origin:center center">0%</span></div>
<div class="a t" style="left:794.4000000000001px;width:800px;text-align:center;top:710.93px;font-size:11.5px;line-height:11.5px;font-weight:400;color:#333;"><span style="display:inline-block;transform:scaleX(0.98);transform-origin:center center">0,00</span></div>
<div class="a t" style="left:944px;width:800px;text-align:center;top:710.93px;font-size:11.5px;line-height:11.5px;font-weight:400;color:#333;"><span style="display:inline-block;transform:scaleX(0.98);transform-origin:center center">0%</span></div>
<div class="a" style="left:820px;top:704px;width:1px;height:24px;background:#aebdd1"></div>
<div class="a" style="left:122px;top:731px;width:98px;height:29px;background:#e4f1fc;border-radius:0 0 0 8px;"></div>
<div class="a" style="left:122px;top:730px;width:1298px;height:1px;background:#7d9cc6"></div>
<div class="a t" style="left:137.3px;top:739.40px;font-size:13.3px;line-height:13.3px;font-weight:400;color:#2f5a88;"><span style="display:inline-block;transform:scaleX(0.96);transform-origin:left center">Totales</span></div>
<div class="a t" style="left:-103px;width:800px;text-align:center;top:740.93px;font-size:11.5px;line-height:11.5px;font-weight:400;color:#333;"><span style="display:inline-block;transform:scaleX(0.98);transform-origin:center center">0</span></div>
<div class="a t" style="left:47px;width:800px;text-align:center;top:740.93px;font-size:11.5px;line-height:11.5px;font-weight:400;color:#333;"><span style="display:inline-block;transform:scaleX(0.98);transform-origin:center center">0%</span></div>
<div class="a t" style="left:196.29999999999995px;width:800px;text-align:center;top:740.93px;font-size:11.5px;line-height:11.5px;font-weight:400;color:#333;"><span style="display:inline-block;transform:scaleX(0.98);transform-origin:center center">0,00</span></div>
<div class="a t" style="left:345.70000000000005px;width:800px;text-align:center;top:740.93px;font-size:11.5px;line-height:11.5px;font-weight:400;color:#333;"><span style="display:inline-block;transform:scaleX(0.98);transform-origin:center center">0%</span></div>
<div class="a t" style="left:495px;width:800px;text-align:center;top:740.93px;font-size:11.5px;line-height:11.5px;font-weight:400;color:#333;"><span style="display:inline-block;transform:scaleX(0.98);transform-origin:center center">1</span></div>
<div class="a t" style="left:645px;width:800px;text-align:center;top:740.93px;font-size:11.5px;line-height:11.5px;font-weight:400;color:#333;"><span style="display:inline-block;transform:scaleX(0.98);transform-origin:center center">100%</span></div>
<div class="a t" style="left:794.4000000000001px;width:800px;text-align:center;top:740.93px;font-size:11.5px;line-height:11.5px;font-weight:400;color:#333;"><span style="display:inline-block;transform:scaleX(0.98);transform-origin:center center">6853,24</span></div>
<div class="a t" style="left:944px;width:800px;text-align:center;top:740.93px;font-size:11.5px;line-height:11.5px;font-weight:400;color:#333;"><span style="display:inline-block;transform:scaleX(0.98);transform-origin:center center">100%</span></div>
<div class="a" style="left:820px;top:734px;width:1px;height:24px;background:#aebdd1"></div>
<div class="a" style="left:122px;top:777px;width:1299px;height:2px;background:#5a7eaa"></div>
<div class="a" style="left:122px;top:809px;width:1299px;height:2px;background:#5a7eaa"></div>
<div class="a t" style="left:131.5px;top:786.00px;font-size:15.3px;line-height:15.3px;font-weight:700;color:#003366;"><span style="display:inline-block;transform:scaleX(0.92);transform-origin:left center">Situación financiera informada por BCRA a 09/2025</span></div>
<div class="a" style="left:123px;top:819px;width:1297px;height:30px;background:#2d5a8a;border-radius:8px 8px 0 0"></div>
<div class="a t" style="left:139px;top:828.70px;font-size:13.3px;line-height:13.3px;font-weight:700;color:#fff;"><span style="display:inline-block;transform:scaleX(0.93);transform-origin:left center">Bancos</span></div>
<div class="a t" style="left:191.60000000000002px;width:800px;text-align:center;top:829.69px;font-size:11.3px;line-height:11.3px;font-weight:700;color:#fff;"><span style="display:inline-block;transform:scaleX(1.05);transform-origin:center center">01/2023</span></div>
<div class="a t" style="left:263.115px;width:800px;text-align:center;top:829.69px;font-size:11.3px;line-height:11.3px;font-weight:700;color:#fff;"><span style="display:inline-block;transform:scaleX(1.05);transform-origin:center center">02/2023</span></div>
<div class="a" style="left:626.70px;top:822px;width:1px;height:26px;background:#7f9cc0"></div>
<div class="a t" style="left:334.94500000000005px;width:800px;text-align:center;top:829.69px;font-size:11.3px;line-height:11.3px;font-weight:700;color:#fff;"><span style="display:inline-block;transform:scaleX(1.05);transform-origin:center center">03/2023</span></div>
<div class="a" style="left:698.53px;top:822px;width:1px;height:26px;background:#7f9cc0"></div>
<div class="a t" style="left:406.7750000000001px;width:800px;text-align:center;top:829.69px;font-size:11.3px;line-height:11.3px;font-weight:700;color:#fff;"><span style="display:inline-block;transform:scaleX(1.05);transform-origin:center center">04/2023</span></div>
<div class="a" style="left:770.36px;top:822px;width:1px;height:26px;background:#7f9cc0"></div>
<div class="a t" style="left:478.605px;width:800px;text-align:center;top:829.69px;font-size:11.3px;line-height:11.3px;font-weight:700;color:#fff;"><span style="display:inline-block;transform:scaleX(1.05);transform-origin:center center">05/2023</span></div>
<div class="a" style="left:842.19px;top:822px;width:1px;height:26px;background:#7f9cc0"></div>
<div class="a t" style="left:550.435px;width:800px;text-align:center;top:829.69px;font-size:11.3px;line-height:11.3px;font-weight:700;color:#fff;"><span style="display:inline-block;transform:scaleX(1.05);transform-origin:center center">06/2023</span></div>
<div class="a" style="left:914.02px;top:822px;width:1px;height:26px;background:#7f9cc0"></div>
<div class="a t" style="left:622.2650000000001px;width:800px;text-align:center;top:829.69px;font-size:11.3px;line-height:11.3px;font-weight:700;color:#fff;"><span style="display:inline-block;transform:scaleX(1.05);transform-origin:center center">07/2023</span></div>
<div class="a" style="left:985.85px;top:822px;width:1px;height:26px;background:#7f9cc0"></div>
<div class="a t" style="left:694.095px;width:800px;text-align:center;top:829.69px;font-size:11.3px;line-height:11.3px;font-weight:700;color:#fff;"><span style="display:inline-block;transform:scaleX(1.05);transform-origin:center center">08/2023</span></div>
<div class="a" style="left:1057.68px;top:822px;width:1px;height:26px;background:#7f9cc0"></div>
<div class="a t" style="left:765.9250000000002px;width:800px;text-align:center;top:829.69px;font-size:11.3px;line-height:11.3px;font-weight:700;color:#fff;"><span style="display:inline-block;transform:scaleX(1.05);transform-origin:center center">09/2023</span></div>
<div class="a" style="left:1129.51px;top:822px;width:1px;height:26px;background:#7f9cc0"></div>
<div class="a t" style="left:837.7550000000001px;width:800px;text-align:center;top:829.69px;font-size:11.3px;line-height:11.3px;font-weight:700;color:#fff;"><span style="display:inline-block;transform:scaleX(1.05);transform-origin:center center">10/2023</span></div>
<div class="a" style="left:1201.34px;top:822px;width:1px;height:26px;background:#7f9cc0"></div>
<div class="a t" style="left:909.585px;width:800px;text-align:center;top:829.69px;font-size:11.3px;line-height:11.3px;font-weight:700;color:#fff;"><span style="display:inline-block;transform:scaleX(1.05);transform-origin:center center">11/2023</span></div>
<div class="a" style="left:1273.17px;top:822px;width:1px;height:26px;background:#7f9cc0"></div>
<div class="a t" style="left:982.5px;width:800px;text-align:center;top:829.69px;font-size:11.3px;line-height:11.3px;font-weight:700;color:#fff;"><span style="display:inline-block;transform:scaleX(1.05);transform-origin:center center">12/2023</span></div>
<div class="a" style="left:1345.00px;top:822px;width:1px;height:26px;background:#7f9cc0"></div>
<div class="a" style="left:123px;top:849px;width:431px;height:30px;background:#e4f1fc"></div>
<div class="a" style="left:554px;top:849px;width:72px;height:30px;background:#fdfdfd"></div>
<div class="a" style="left:626px;top:849px;width:793px;height:30px;background:#96c9ad"></div>
<div class="a t" style="left:138.5px;top:858.50px;font-size:13.3px;line-height:13.3px;font-weight:400;color:#1f4470;"><span style="display:inline-block;transform:scaleX(0.932);transform-origin:left center">BANCO SANTANDER ARGENTINA S.A.</span></div>
<div class="a t" style="left:-177.5px;width:800px;text-align:right;top:858.93px;font-size:11.5px;line-height:11.5px;font-weight:400;color:#333;">-</div>
<div class="a t" style="left:-106.10000000000002px;width:800px;text-align:right;top:858.93px;font-size:11.5px;line-height:11.5px;font-weight:400;color:#233247;"><span style="display:inline-block;transform:scaleX(0.98);transform-origin:right center">658</span></div>
<div class="a t" style="left:-34.0px;width:800px;text-align:right;top:858.93px;font-size:11.5px;line-height:11.5px;font-weight:400;color:#233247;"><span style="display:inline-block;transform:scaleX(0.98);transform-origin:right center">658</span></div>
<div class="a t" style="left:38.09999999999991px;width:800px;text-align:right;top:858.93px;font-size:11.5px;line-height:11.5px;font-weight:400;color:#233247;"><span style="display:inline-block;transform:scaleX(0.98);transform-origin:right center">658</span></div>
<div class="a t" style="left:110.19999999999993px;width:800px;text-align:right;top:858.93px;font-size:11.5px;line-height:11.5px;font-weight:400;color:#233247;"><span style="display:inline-block;transform:scaleX(0.98);transform-origin:right center">658</span></div>
<div class="a t" style="left:182.29999999999995px;width:800px;text-align:right;top:858.93px;font-size:11.5px;line-height:11.5px;font-weight:400;color:#233247;"><span style="display:inline-block;transform:scaleX(0.98);transform-origin:right center">658</span></div>
<div class="a t" style="left:254.39999999999986px;width:800px;text-align:right;top:858.93px;font-size:11.5px;line-height:11.5px;font-weight:400;color:#233247;"><span style="display:inline-block;transform:scaleX(0.98);transform-origin:right center">658</span></div>
<div class="a t" style="left:326.5px;width:800px;text-align:right;top:858.93px;font-size:11.5px;line-height:11.5px;font-weight:400;color:#233247;"><span style="display:inline-block;transform:scaleX(0.98);transform-origin:right center">658</span></div>
<div class="a t" style="left:398.5999999999999px;width:800px;text-align:right;top:858.93px;font-size:11.5px;line-height:11.5px;font-weight:400;color:#233247;"><span style="display:inline-block;transform:scaleX(0.98);transform-origin:right center">658</span></div>
<div class="a t" style="left:470.6999999999998px;width:800px;text-align:right;top:858.93px;font-size:11.5px;line-height:11.5px;font-weight:400;color:#233247;"><span style="display:inline-block;transform:scaleX(0.98);transform-origin:right center">658</span></div>
<div class="a t" style="left:542.8px;width:800px;text-align:right;top:858.93px;font-size:11.5px;line-height:11.5px;font-weight:400;color:#233247;"><span style="display:inline-block;transform:scaleX(0.98);transform-origin:right center">658</span></div>
<div class="a t" style="left:615.5px;width:800px;text-align:right;top:858.93px;font-size:11.5px;line-height:11.5px;font-weight:400;color:#233247;"><span style="display:inline-block;transform:scaleX(0.98);transform-origin:right center">658</span></div>
<div class="a" style="left:123px;top:879px;width:431px;height:30px;background:#e4f1fc"></div>
<div class="a" style="left:554px;top:879px;width:72px;height:30px;background:#fdfdfd"></div>
<div class="a" style="left:626px;top:879px;width:793px;height:30px;background:#96c9ad"></div>
<div class="a t" style="left:138.5px;top:888.50px;font-size:13.3px;line-height:13.3px;font-weight:400;color:#1f4470;"><span style="display:inline-block;transform:scaleX(0.932);transform-origin:left center">BANCO DE LA PROVINCIA DE BUENOS AIRES</span></div>
<div class="a t" style="left:-177.5px;width:800px;text-align:right;top:888.93px;font-size:11.5px;line-height:11.5px;font-weight:400;color:#333;">-</div>
<div class="a t" style="left:-106.10000000000002px;width:800px;text-align:right;top:888.93px;font-size:11.5px;line-height:11.5px;font-weight:400;color:#233247;"><span style="display:inline-block;transform:scaleX(0.98);transform-origin:right center">658</span></div>
<div class="a t" style="left:-34.0px;width:800px;text-align:right;top:888.93px;font-size:11.5px;line-height:11.5px;font-weight:400;color:#233247;"><span style="display:inline-block;transform:scaleX(0.98);transform-origin:right center">658</span></div>
<div class="a t" style="left:38.09999999999991px;width:800px;text-align:right;top:888.93px;font-size:11.5px;line-height:11.5px;font-weight:400;color:#233247;"><span style="display:inline-block;transform:scaleX(0.98);transform-origin:right center">658</span></div>
<div class="a t" style="left:110.19999999999993px;width:800px;text-align:right;top:888.93px;font-size:11.5px;line-height:11.5px;font-weight:400;color:#233247;"><span style="display:inline-block;transform:scaleX(0.98);transform-origin:right center">658</span></div>
<div class="a t" style="left:182.29999999999995px;width:800px;text-align:right;top:888.93px;font-size:11.5px;line-height:11.5px;font-weight:400;color:#233247;"><span style="display:inline-block;transform:scaleX(0.98);transform-origin:right center">658</span></div>
<div class="a t" style="left:254.39999999999986px;width:800px;text-align:right;top:888.93px;font-size:11.5px;line-height:11.5px;font-weight:400;color:#233247;"><span style="display:inline-block;transform:scaleX(0.98);transform-origin:right center">658</span></div>
<div class="a t" style="left:326.5px;width:800px;text-align:right;top:888.93px;font-size:11.5px;line-height:11.5px;font-weight:400;color:#233247;"><span style="display:inline-block;transform:scaleX(0.98);transform-origin:right center">658</span></div>
<div class="a t" style="left:398.5999999999999px;width:800px;text-align:right;top:888.93px;font-size:11.5px;line-height:11.5px;font-weight:400;color:#233247;"><span style="display:inline-block;transform:scaleX(0.98);transform-origin:right center">658</span></div>
<div class="a t" style="left:470.6999999999998px;width:800px;text-align:right;top:888.93px;font-size:11.5px;line-height:11.5px;font-weight:400;color:#233247;"><span style="display:inline-block;transform:scaleX(0.98);transform-origin:right center">658</span></div>
<div class="a t" style="left:542.8px;width:800px;text-align:right;top:888.93px;font-size:11.5px;line-height:11.5px;font-weight:400;color:#233247;"><span style="display:inline-block;transform:scaleX(0.98);transform-origin:right center">658</span></div>
<div class="a t" style="left:615.5px;width:800px;text-align:right;top:888.93px;font-size:11.5px;line-height:11.5px;font-weight:400;color:#233247;"><span style="display:inline-block;transform:scaleX(0.98);transform-origin:right center">658</span></div>
<div class="a" style="left:123px;top:879px;width:1297px;height:1px;background:#8aa6cc"></div>
<div class="a" style="left:123px;top:909px;width:431px;height:30px;background:#e4f1fc"></div>
<div class="a" style="left:554px;top:909px;width:72px;height:30px;background:#fdfdfd"></div>
<div class="a" style="left:626px;top:909px;width:793px;height:30px;background:#96c9ad"></div>
<div class="a t" style="left:138.5px;top:918.50px;font-size:13.3px;line-height:13.3px;font-weight:400;color:#1f4470;"><span style="display:inline-block;transform:scaleX(0.932);transform-origin:left center">INDUSTRIAL AND COMMERCIAL BANK OF CHINA (ARGENTINA) S.A.U.</span></div>
<div class="a t" style="left:-177.5px;width:800px;text-align:right;top:918.93px;font-size:11.5px;line-height:11.5px;font-weight:400;color:#333;">-</div>
<div class="a t" style="left:-106.10000000000002px;width:800px;text-align:right;top:918.93px;font-size:11.5px;line-height:11.5px;font-weight:400;color:#233247;"><span style="display:inline-block;transform:scaleX(0.98);transform-origin:right center">658</span></div>
<div class="a t" style="left:-34.0px;width:800px;text-align:right;top:918.93px;font-size:11.5px;line-height:11.5px;font-weight:400;color:#233247;"><span style="display:inline-block;transform:scaleX(0.98);transform-origin:right center">658</span></div>
<div class="a t" style="left:38.09999999999991px;width:800px;text-align:right;top:918.93px;font-size:11.5px;line-height:11.5px;font-weight:400;color:#233247;"><span style="display:inline-block;transform:scaleX(0.98);transform-origin:right center">658</span></div>
<div class="a t" style="left:110.19999999999993px;width:800px;text-align:right;top:918.93px;font-size:11.5px;line-height:11.5px;font-weight:400;color:#233247;"><span style="display:inline-block;transform:scaleX(0.98);transform-origin:right center">658</span></div>
<div class="a t" style="left:182.29999999999995px;width:800px;text-align:right;top:918.93px;font-size:11.5px;line-height:11.5px;font-weight:400;color:#233247;"><span style="display:inline-block;transform:scaleX(0.98);transform-origin:right center">658</span></div>
<div class="a t" style="left:254.39999999999986px;width:800px;text-align:right;top:918.93px;font-size:11.5px;line-height:11.5px;font-weight:400;color:#233247;"><span style="display:inline-block;transform:scaleX(0.98);transform-origin:right center">658</span></div>
<div class="a t" style="left:326.5px;width:800px;text-align:right;top:918.93px;font-size:11.5px;line-height:11.5px;font-weight:400;color:#233247;"><span style="display:inline-block;transform:scaleX(0.98);transform-origin:right center">658</span></div>
<div class="a t" style="left:398.5999999999999px;width:800px;text-align:right;top:918.93px;font-size:11.5px;line-height:11.5px;font-weight:400;color:#233247;"><span style="display:inline-block;transform:scaleX(0.98);transform-origin:right center">658</span></div>
<div class="a t" style="left:470.6999999999998px;width:800px;text-align:right;top:918.93px;font-size:11.5px;line-height:11.5px;font-weight:400;color:#233247;"><span style="display:inline-block;transform:scaleX(0.98);transform-origin:right center">658</span></div>
<div class="a t" style="left:542.8px;width:800px;text-align:right;top:918.93px;font-size:11.5px;line-height:11.5px;font-weight:400;color:#233247;"><span style="display:inline-block;transform:scaleX(0.98);transform-origin:right center">658</span></div>
<div class="a t" style="left:615.5px;width:800px;text-align:right;top:918.93px;font-size:11.5px;line-height:11.5px;font-weight:400;color:#233247;"><span style="display:inline-block;transform:scaleX(0.98);transform-origin:right center">658</span></div>
<div class="a" style="left:123px;top:909px;width:1297px;height:1px;background:#8aa6cc"></div>
<div class="a" style="left:123px;top:939px;width:431px;height:30px;background:#e4f1fc"></div>
<div class="a" style="left:554px;top:939px;width:72px;height:30px;background:#fdfdfd"></div>
<div class="a" style="left:626px;top:939px;width:793px;height:30px;background:#96c9ad"></div>
<div class="a t" style="left:138.5px;top:948.50px;font-size:13.3px;line-height:13.3px;font-weight:400;color:#1f4470;"><span style="display:inline-block;transform:scaleX(0.932);transform-origin:left center">CITIBANK N.A.</span></div>
<div class="a t" style="left:-177.5px;width:800px;text-align:right;top:948.93px;font-size:11.5px;line-height:11.5px;font-weight:400;color:#333;">-</div>
<div class="a t" style="left:-106.10000000000002px;width:800px;text-align:right;top:948.93px;font-size:11.5px;line-height:11.5px;font-weight:400;color:#233247;"><span style="display:inline-block;transform:scaleX(0.98);transform-origin:right center">658</span></div>
<div class="a t" style="left:-34.0px;width:800px;text-align:right;top:948.93px;font-size:11.5px;line-height:11.5px;font-weight:400;color:#233247;"><span style="display:inline-block;transform:scaleX(0.98);transform-origin:right center">658</span></div>
<div class="a t" style="left:38.09999999999991px;width:800px;text-align:right;top:948.93px;font-size:11.5px;line-height:11.5px;font-weight:400;color:#233247;"><span style="display:inline-block;transform:scaleX(0.98);transform-origin:right center">658</span></div>
<div class="a t" style="left:110.19999999999993px;width:800px;text-align:right;top:948.93px;font-size:11.5px;line-height:11.5px;font-weight:400;color:#233247;"><span style="display:inline-block;transform:scaleX(0.98);transform-origin:right center">658</span></div>
<div class="a t" style="left:182.29999999999995px;width:800px;text-align:right;top:948.93px;font-size:11.5px;line-height:11.5px;font-weight:400;color:#233247;"><span style="display:inline-block;transform:scaleX(0.98);transform-origin:right center">658</span></div>
<div class="a t" style="left:254.39999999999986px;width:800px;text-align:right;top:948.93px;font-size:11.5px;line-height:11.5px;font-weight:400;color:#233247;"><span style="display:inline-block;transform:scaleX(0.98);transform-origin:right center">658</span></div>
<div class="a t" style="left:326.5px;width:800px;text-align:right;top:948.93px;font-size:11.5px;line-height:11.5px;font-weight:400;color:#233247;"><span style="display:inline-block;transform:scaleX(0.98);transform-origin:right center">658</span></div>
<div class="a t" style="left:398.5999999999999px;width:800px;text-align:right;top:948.93px;font-size:11.5px;line-height:11.5px;font-weight:400;color:#233247;"><span style="display:inline-block;transform:scaleX(0.98);transform-origin:right center">658</span></div>
<div class="a t" style="left:470.6999999999998px;width:800px;text-align:right;top:948.93px;font-size:11.5px;line-height:11.5px;font-weight:400;color:#233247;"><span style="display:inline-block;transform:scaleX(0.98);transform-origin:right center">658</span></div>
<div class="a t" style="left:542.8px;width:800px;text-align:right;top:948.93px;font-size:11.5px;line-height:11.5px;font-weight:400;color:#233247;"><span style="display:inline-block;transform:scaleX(0.98);transform-origin:right center">658</span></div>
<div class="a t" style="left:615.5px;width:800px;text-align:right;top:948.93px;font-size:11.5px;line-height:11.5px;font-weight:400;color:#233247;"><span style="display:inline-block;transform:scaleX(0.98);transform-origin:right center">658</span></div>
<div class="a" style="left:123px;top:939px;width:1297px;height:1px;background:#8aa6cc"></div>
<div class="a" style="left:123px;top:969px;width:431px;height:30px;background:#e4f1fc"></div>
<div class="a" style="left:554px;top:969px;width:72px;height:30px;background:#fdfdfd"></div>
<div class="a" style="left:626px;top:969px;width:793px;height:30px;background:#96c9ad"></div>
<div class="a t" style="left:138.5px;top:978.50px;font-size:13.3px;line-height:13.3px;font-weight:400;color:#1f4470;"><span style="display:inline-block;transform:scaleX(0.932);transform-origin:left center">AMERICAN EXPRESS ARGENTINA S.A.</span></div>
<div class="a t" style="left:-177.5px;width:800px;text-align:right;top:978.93px;font-size:11.5px;line-height:11.5px;font-weight:400;color:#333;">-</div>
<div class="a t" style="left:-106.10000000000002px;width:800px;text-align:right;top:978.93px;font-size:11.5px;line-height:11.5px;font-weight:400;color:#233247;"><span style="display:inline-block;transform:scaleX(0.98);transform-origin:right center">658</span></div>
<div class="a t" style="left:-34.0px;width:800px;text-align:right;top:978.93px;font-size:11.5px;line-height:11.5px;font-weight:400;color:#233247;"><span style="display:inline-block;transform:scaleX(0.98);transform-origin:right center">658</span></div>
<div class="a t" style="left:38.09999999999991px;width:800px;text-align:right;top:978.93px;font-size:11.5px;line-height:11.5px;font-weight:400;color:#233247;"><span style="display:inline-block;transform:scaleX(0.98);transform-origin:right center">658</span></div>
<div class="a t" style="left:110.19999999999993px;width:800px;text-align:right;top:978.93px;font-size:11.5px;line-height:11.5px;font-weight:400;color:#233247;"><span style="display:inline-block;transform:scaleX(0.98);transform-origin:right center">658</span></div>
<div class="a t" style="left:182.29999999999995px;width:800px;text-align:right;top:978.93px;font-size:11.5px;line-height:11.5px;font-weight:400;color:#233247;"><span style="display:inline-block;transform:scaleX(0.98);transform-origin:right center">658</span></div>
<div class="a t" style="left:254.39999999999986px;width:800px;text-align:right;top:978.93px;font-size:11.5px;line-height:11.5px;font-weight:400;color:#233247;"><span style="display:inline-block;transform:scaleX(0.98);transform-origin:right center">658</span></div>
<div class="a t" style="left:326.5px;width:800px;text-align:right;top:978.93px;font-size:11.5px;line-height:11.5px;font-weight:400;color:#233247;"><span style="display:inline-block;transform:scaleX(0.98);transform-origin:right center">658</span></div>
<div class="a t" style="left:398.5999999999999px;width:800px;text-align:right;top:978.93px;font-size:11.5px;line-height:11.5px;font-weight:400;color:#233247;"><span style="display:inline-block;transform:scaleX(0.98);transform-origin:right center">658</span></div>
<div class="a t" style="left:470.6999999999998px;width:800px;text-align:right;top:978.93px;font-size:11.5px;line-height:11.5px;font-weight:400;color:#233247;"><span style="display:inline-block;transform:scaleX(0.98);transform-origin:right center">658</span></div>
<div class="a t" style="left:542.8px;width:800px;text-align:right;top:978.93px;font-size:11.5px;line-height:11.5px;font-weight:400;color:#233247;"><span style="display:inline-block;transform:scaleX(0.98);transform-origin:right center">658</span></div>
<div class="a t" style="left:615.5px;width:800px;text-align:right;top:978.93px;font-size:11.5px;line-height:11.5px;font-weight:400;color:#233247;"><span style="display:inline-block;transform:scaleX(0.98);transform-origin:right center">658</span></div>
<div class="a" style="left:123px;top:969px;width:1297px;height:1px;background:#8aa6cc"></div>
<div class="a" style="left:123px;top:999px;width:431px;height:30px;background:#e4f1fc"></div>
<div class="a" style="left:554px;top:999px;width:72px;height:30px;background:#fdfdfd"></div>
<div class="a" style="left:626px;top:999px;width:793px;height:30px;background:#96c9ad"></div>
<div class="a t" style="left:138.5px;top:1008.50px;font-size:13.3px;line-height:13.3px;font-weight:400;color:#1f4470;"><span style="display:inline-block;transform:scaleX(0.932);transform-origin:left center">BANCO BBVA ARGENTINA S.A.</span></div>
<div class="a t" style="left:-177.5px;width:800px;text-align:right;top:1008.93px;font-size:11.5px;line-height:11.5px;font-weight:400;color:#333;">-</div>
<div class="a t" style="left:-106.10000000000002px;width:800px;text-align:right;top:1008.93px;font-size:11.5px;line-height:11.5px;font-weight:400;color:#233247;"><span style="display:inline-block;transform:scaleX(0.98);transform-origin:right center">658</span></div>
<div class="a t" style="left:-34.0px;width:800px;text-align:right;top:1008.93px;font-size:11.5px;line-height:11.5px;font-weight:400;color:#233247;"><span style="display:inline-block;transform:scaleX(0.98);transform-origin:right center">658</span></div>
<div class="a t" style="left:38.09999999999991px;width:800px;text-align:right;top:1008.93px;font-size:11.5px;line-height:11.5px;font-weight:400;color:#233247;"><span style="display:inline-block;transform:scaleX(0.98);transform-origin:right center">658</span></div>
<div class="a t" style="left:110.19999999999993px;width:800px;text-align:right;top:1008.93px;font-size:11.5px;line-height:11.5px;font-weight:400;color:#233247;"><span style="display:inline-block;transform:scaleX(0.98);transform-origin:right center">658</span></div>
<div class="a t" style="left:182.29999999999995px;width:800px;text-align:right;top:1008.93px;font-size:11.5px;line-height:11.5px;font-weight:400;color:#233247;"><span style="display:inline-block;transform:scaleX(0.98);transform-origin:right center">658</span></div>
<div class="a t" style="left:254.39999999999986px;width:800px;text-align:right;top:1008.93px;font-size:11.5px;line-height:11.5px;font-weight:400;color:#233247;"><span style="display:inline-block;transform:scaleX(0.98);transform-origin:right center">658</span></div>
<div class="a t" style="left:326.5px;width:800px;text-align:right;top:1008.93px;font-size:11.5px;line-height:11.5px;font-weight:400;color:#233247;"><span style="display:inline-block;transform:scaleX(0.98);transform-origin:right center">658</span></div>
<div class="a t" style="left:398.5999999999999px;width:800px;text-align:right;top:1008.93px;font-size:11.5px;line-height:11.5px;font-weight:400;color:#233247;"><span style="display:inline-block;transform:scaleX(0.98);transform-origin:right center">658</span></div>
<div class="a t" style="left:470.6999999999998px;width:800px;text-align:right;top:1008.93px;font-size:11.5px;line-height:11.5px;font-weight:400;color:#233247;"><span style="display:inline-block;transform:scaleX(0.98);transform-origin:right center">658</span></div>
<div class="a t" style="left:542.8px;width:800px;text-align:right;top:1008.93px;font-size:11.5px;line-height:11.5px;font-weight:400;color:#233247;"><span style="display:inline-block;transform:scaleX(0.98);transform-origin:right center">658</span></div>
<div class="a t" style="left:615.5px;width:800px;text-align:right;top:1008.93px;font-size:11.5px;line-height:11.5px;font-weight:400;color:#233247;"><span style="display:inline-block;transform:scaleX(0.98);transform-origin:right center">658</span></div>
<div class="a" style="left:123px;top:999px;width:1297px;height:1px;background:#8aa6cc"></div>
<div class="a" style="left:123px;top:849px;width:1px;height:190px;background:#8aa6cc"></div>
<div class="a" style="left:554px;top:849px;width:1px;height:180px;background:#8aa6cc"></div>
<div class="a" style="left:626px;top:849px;width:1px;height:180px;background:#8aa6cc"></div>
<div class="a" style="left:698px;top:849px;width:1px;height:180px;background:#8aa6cc"></div>
<div class="a" style="left:770px;top:849px;width:1px;height:180px;background:#8aa6cc"></div>
<div class="a" style="left:842px;top:849px;width:1px;height:180px;background:#8aa6cc"></div>
<div class="a" style="left:914px;top:849px;width:1px;height:180px;background:#8aa6cc"></div>
<div class="a" style="left:986px;top:849px;width:1px;height:180px;background:#8aa6cc"></div>
<div class="a" style="left:1058px;top:849px;width:1px;height:180px;background:#8aa6cc"></div>
<div class="a" style="left:1130px;top:849px;width:1px;height:180px;background:#8aa6cc"></div>
<div class="a" style="left:1203px;top:849px;width:1px;height:180px;background:#8aa6cc"></div>
<div class="a" style="left:1275px;top:849px;width:1px;height:180px;background:#8aa6cc"></div>
<div class="a" style="left:1347px;top:849px;width:1px;height:180px;background:#8aa6cc"></div>
<div class="a" style="left:1419px;top:849px;width:1px;height:180px;background:#8aa6cc"></div>
<div class="a" style="left:554px;top:849px;width:72px;height:30px;border-top:2px solid #4f74a3;border-left:2px solid #4f74a3"></div>
<div class="a" style="left:123px;top:1029px;width:1297px;height:30px;background:#fdfdfd"></div>
<div class="a" style="left:123px;top:1029px;width:1297px;height:2px;background:#0b2f5e"></div>
<div class="a t" style="left:139px;top:1038.69px;font-size:13.3px;line-height:13.3px;font-weight:700;color:#003366;"><span style="display:inline-block;transform:scaleX(0.93);transform-origin:left center">Total Periodo</span></div>
<div class="a" style="left:123px;top:1029px;width:1px;height:30px;background:#0b2f5e"></div>
<div class="a" style="left:553px;top:1029px;width:2px;height:30px;background:#0b2f5e"></div>
<div class="a" style="left:626px;top:1029px;width:2px;height:30px;background:#6688b4"></div>
<div class="a" style="left:698px;top:1029px;width:2px;height:30px;background:#6688b4"></div>
<div class="a" style="left:770px;top:1029px;width:2px;height:30px;background:#6688b4"></div>
<div class="a" style="left:842px;top:1029px;width:2px;height:30px;background:#6688b4"></div>
<div class="a" style="left:914px;top:1029px;width:2px;height:30px;background:#6688b4"></div>
<div class="a" style="left:986px;top:1029px;width:2px;height:30px;background:#6688b4"></div>
<div class="a" style="left:1058px;top:1029px;width:2px;height:30px;background:#6688b4"></div>
<div class="a" style="left:1130px;top:1029px;width:2px;height:30px;background:#6688b4"></div>
<div class="a" style="left:1203px;top:1029px;width:2px;height:30px;background:#6688b4"></div>
<div class="a" style="left:1275px;top:1029px;width:2px;height:30px;background:#6688b4"></div>
<div class="a" style="left:1347px;top:1029px;width:2px;height:30px;background:#6688b4"></div>
<div class="a" style="left:1418px;top:1029px;width:2px;height:30px;background:#0b2f5e"></div>
<div class="a t" style="left:-177.5px;width:800px;text-align:right;top:1038.92px;font-size:11.5px;line-height:11.5px;font-weight:400;color:#333;">-</div>
<div class="a t" style="left:-106.10000000000002px;width:800px;text-align:right;top:1038.92px;font-size:11.5px;line-height:11.5px;font-weight:400;color:#233247;"><span style="display:inline-block;transform:scaleX(0.98);transform-origin:right center">658</span></div>
<div class="a t" style="left:-34.0px;width:800px;text-align:right;top:1038.92px;font-size:11.5px;line-height:11.5px;font-weight:400;color:#233247;"><span style="display:inline-block;transform:scaleX(0.98);transform-origin:right center">658</span></div>
<div class="a t" style="left:38.09999999999991px;width:800px;text-align:right;top:1038.92px;font-size:11.5px;line-height:11.5px;font-weight:400;color:#233247;"><span style="display:inline-block;transform:scaleX(0.98);transform-origin:right center">658</span></div>
<div class="a t" style="left:110.19999999999993px;width:800px;text-align:right;top:1038.92px;font-size:11.5px;line-height:11.5px;font-weight:400;color:#233247;"><span style="display:inline-block;transform:scaleX(0.98);transform-origin:right center">658</span></div>
<div class="a t" style="left:182.29999999999995px;width:800px;text-align:right;top:1038.92px;font-size:11.5px;line-height:11.5px;font-weight:400;color:#233247;"><span style="display:inline-block;transform:scaleX(0.98);transform-origin:right center">658</span></div>
<div class="a t" style="left:254.39999999999986px;width:800px;text-align:right;top:1038.92px;font-size:11.5px;line-height:11.5px;font-weight:400;color:#233247;"><span style="display:inline-block;transform:scaleX(0.98);transform-origin:right center">658</span></div>
<div class="a t" style="left:326.5px;width:800px;text-align:right;top:1038.92px;font-size:11.5px;line-height:11.5px;font-weight:400;color:#233247;"><span style="display:inline-block;transform:scaleX(0.98);transform-origin:right center">658</span></div>
<div class="a t" style="left:398.5999999999999px;width:800px;text-align:right;top:1038.92px;font-size:11.5px;line-height:11.5px;font-weight:400;color:#233247;"><span style="display:inline-block;transform:scaleX(0.98);transform-origin:right center">658</span></div>
<div class="a t" style="left:470.6999999999998px;width:800px;text-align:right;top:1038.92px;font-size:11.5px;line-height:11.5px;font-weight:400;color:#233247;"><span style="display:inline-block;transform:scaleX(0.98);transform-origin:right center">658</span></div>
<div class="a t" style="left:542.8px;width:800px;text-align:right;top:1038.92px;font-size:11.5px;line-height:11.5px;font-weight:400;color:#233247;"><span style="display:inline-block;transform:scaleX(0.98);transform-origin:right center">658</span></div>
<div class="a t" style="left:615.5px;width:800px;text-align:right;top:1038.92px;font-size:11.5px;line-height:11.5px;font-weight:400;color:#233247;"><span style="display:inline-block;transform:scaleX(0.98);transform-origin:right center">658</span></div>
<svg style="left:1428px;top:244px" width="8" height="5"><path d="M0 5 L4 0 L8 5 Z" fill="#7a7a7a"/></svg><div class="a" style="left:1430px;top:258px;width:4px;height:264px;background:#808080;border-radius:2px"></div>
<svg style="left:1428px;top:1031px" width="8" height="5"><path d="M0 0 L4 5 L8 0 Z" fill="#7a7a7a"/></svg></div></div>
</div></div>
</body></html>
